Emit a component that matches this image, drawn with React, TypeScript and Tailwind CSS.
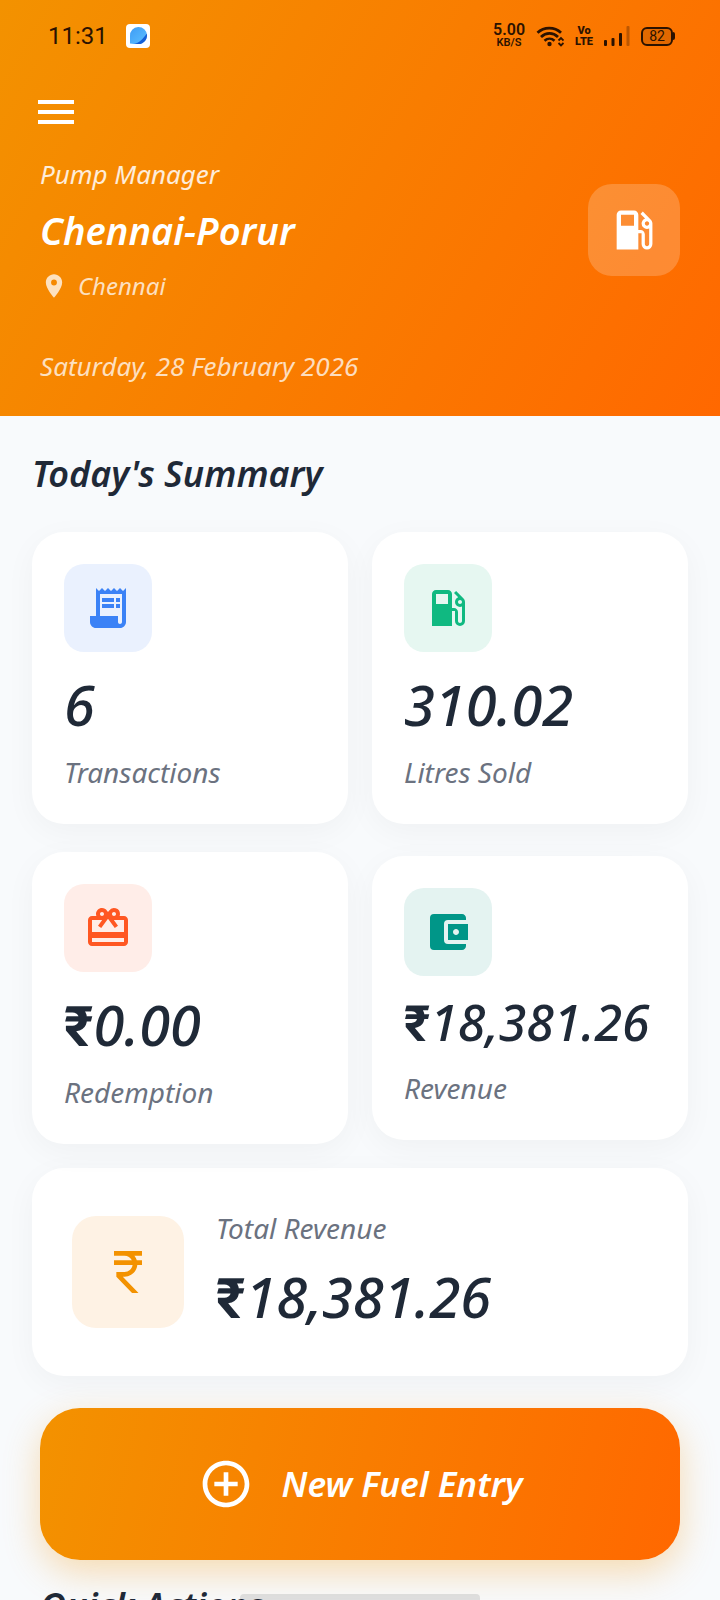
import type { ReactNode } from "react";
import {
  MdAccountBalanceWallet,
  MdAddCircleOutline,
  MdCardGiftcard,
  MdCurrencyRupee,
  MdLocalGasStation,
  MdLocationOn,
  MdMenu,
  MdReceiptLong,
} from "react-icons/md";

const cardShadow = "shadow-[0_8px_32px_rgba(0,0,0,0.04)]";

function StatusBar() {
  return (
    <div className="flex h-18 items-center justify-between pr-[45px] pl-12 text-[#2b1200]">
      <div className="flex items-center gap-[18px]">
        <span className="font-['Roboto',sans-serif] text-[24px] leading-8">11:31</span>
        <svg viewBox="0 0 24 24" className="size-6" aria-hidden="true">
          <defs>
            <linearGradient id="bubble" x1="0" y1="0" x2="1" y2="1">
              <stop offset="0" stopColor="#3f9cf5" />
              <stop offset="1" stopColor="#5cc0ff" />
            </linearGradient>
          </defs>
          <rect width="24" height="24" rx="4" fill="#fff" />
          <path d="M4 19.500V12a8.500 8.500 0 1 1 8.500 8H8l-4-.500Z" fill="url(#bubble)" />
          <path d="M8 20c5-1 9-5 12.800-10.500A8.500 8.500 0 0 1 12.500 20Z" fill="#155fd6" />
        </svg>
      </div>
      <div className="flex items-center gap-[11px]">
        <div className="flex flex-col items-center font-['Roboto',sans-serif] font-semibold">
          <span className="text-[16px] leading-[14px]">5.00</span>
          <span className="text-[11px] leading-[12px]">KB/S</span>
        </div>
        <svg viewBox="0 0 28 22" className="h-[22px] w-7" fill="none" stroke="currentColor" aria-hidden="true">
          <path d="M1.500 7.800C8 1.600 18.500 1.600 25 7.800" strokeWidth="2.800" />
          <path d="M5 12c5-4.800 12-4.800 17 0" strokeWidth="2.800" />
          <path d="M8.500 15.800c3-2.800 7-2.800 10 0" strokeWidth="2.600" />
          <circle cx="13.500" cy="19" r="2.200" fill="currentColor" stroke="none" />
          <path d="m22.500 15.500 2.500-2.500 2.500 2.500M22.500 18l2.500 2.500 2.500-2.500" strokeWidth="1.800" />
        </svg>
        <div className="flex flex-col items-center font-['Roboto',sans-serif] text-[11px] leading-[11px] font-black">
          <span>Vo</span>
          <span>LTE</span>
        </div>
        <svg viewBox="0 0 26 20" className="h-5 w-[26px]" fill="currentColor" aria-hidden="true">
          <rect x="0" y="14" width="3" height="6" rx="1" />
          <rect x="7.500" y="12" width="3" height="8" rx="1" />
          <rect x="15" y="7" width="3" height="13" rx="1" />
          <rect x="22.500" y="0" width="3" height="20" rx="1" opacity=".3" />
        </svg>
        <div className="flex items-center">
          <span className="flex h-[19px] w-8 items-center justify-center rounded-md border-2 border-current bg-black/10 font-['Roboto',sans-serif] text-[14px] leading-none">
            82
          </span>
          <span className="h-2 w-0.5 rounded-r bg-current" />
        </div>
      </div>
    </div>
  );
}

function Amount({ value, rupee, small }: { value: string; rupee?: boolean; small?: boolean }) {
  return (
    <p className={`${small ? "text-[50px] leading-[60px]" : "text-[56px] leading-16"} font-medium whitespace-nowrap text-[#1f2937] italic`}>
      {rupee && <span className="font-['Roboto',sans-serif] leading-none font-bold not-italic">₹</span>}
      {value}
    </p>
  );
}

interface StatProps {
  icon: ReactNode;
  tint: string;
  value: string;
  label: string;
  rupee?: boolean;
  small?: boolean;
}

function StatCard({ icon, tint, value, label, rupee, small }: StatProps) {
  return (
    <article className={`rounded-4xl bg-white p-8 ${cardShadow}`}>
      <div className={`flex size-[88px] items-center justify-center rounded-[20px] text-[48px] ${tint}`}>{icon}</div>
      <div className={small ? "mt-4" : "mt-5"}>
        <Amount value={value} rupee={rupee} small={small} />
      </div>
      <p className="mt-4 text-[28px] leading-10 text-[#6b7280] italic">{label}</p>
    </article>
  );
}

export default function App() {
  return (
    <div className="flex h-screen flex-col overflow-hidden bg-[#f8fafc] font-['Noto_Sans','Open_Sans',sans-serif]">
      <header className="shrink-0 bg-linear-[120deg] from-[#f39200] to-[#ff6800] pb-8 text-white">
        <StatusBar />
        <button type="button" aria-label="Open menu" className="mt-4 ml-8 block text-[48px]">
          <MdMenu />
        </button>
        <div className="flex items-center justify-between px-10 pt-5">
          <div>
            <p className="text-[26px] leading-9 text-white/85 italic">Pump Manager</p>
            <h1 className="mt-3 text-[38px] leading-13 font-semibold italic">Chennai-Porur</h1>
            <p className="mt-3 flex items-center gap-2.5 text-[24px] leading-9 text-white/75 italic">
              <MdLocationOn className="size-7" />
              Chennai
            </p>
          </div>
          <div className="flex size-[92px] items-center justify-center rounded-3xl bg-white/20 text-[52px]">
            <MdLocalGasStation />
          </div>
        </div>
        <p className="mt-11 px-10 text-[26px] leading-9 text-white/75 italic">Saturday, 28 February 2026</p>
      </header>

      <main className="min-h-0 flex-1 overflow-hidden px-8 pt-8">
        <h2 className="text-[36px] leading-[52px] font-semibold text-[#1f2937] italic">Today's Summary</h2>
        <div className="mt-8 grid grid-cols-2 items-center gap-x-6 gap-y-7">
          <StatCard icon={<MdReceiptLong />} tint="bg-[#eaf1fe] text-[#3b82f6]" value="6" label="Transactions" />
          <StatCard icon={<MdLocalGasStation />} tint="bg-[#e6f7f1] text-[#10b981]" value="310.02" label="Litres Sold" />
          <StatCard icon={<MdCardGiftcard />} tint="bg-[#ffede8] text-[#ff5722]" value="0.00" label="Redemption" rupee />
          <StatCard icon={<MdAccountBalanceWallet />} tint="bg-[#e4f3f1] text-[#009688]" value="18,381.26" label="Revenue" rupee small />
        </div>

        <article className={`mt-6 flex items-center gap-8 rounded-4xl bg-white px-10 py-10 ${cardShadow}`}>
          <div className="flex size-28 shrink-0 items-center justify-center rounded-3xl bg-[#fef2e4] text-[#f39200]">
            <MdCurrencyRupee className="size-14" />
          </div>
          <div className="pb-2">
            <p className="text-[28px] leading-10 text-[#6b7280] italic">Total Revenue</p>
            <div className="mt-4">
              <Amount value="18,381.26" rupee />
            </div>
          </div>
        </article>

        <div className="px-2 pt-8">
          <button
            type="button"
            className="flex h-38 w-full items-center justify-center gap-7 rounded-[40px] bg-linear-[103deg] from-[#f39200] to-[#ff6800] text-[35px] font-semibold text-white italic shadow-[0_12px_36px_rgba(243,146,0,0.3)]"
          >
            <MdAddCircleOutline className="size-14" />
            New Fuel Entry
          </button>
          <h2 className="mt-5 text-[36px] leading-[52px] font-semibold text-[#1f2937] italic">Quick Actions</h2>
        </div>
      </main>
      <div className="fixed inset-x-0 bottom-0 mx-auto h-1.5 w-1/3 rounded-t-sm bg-black/10" />
    </div>
  );
}
